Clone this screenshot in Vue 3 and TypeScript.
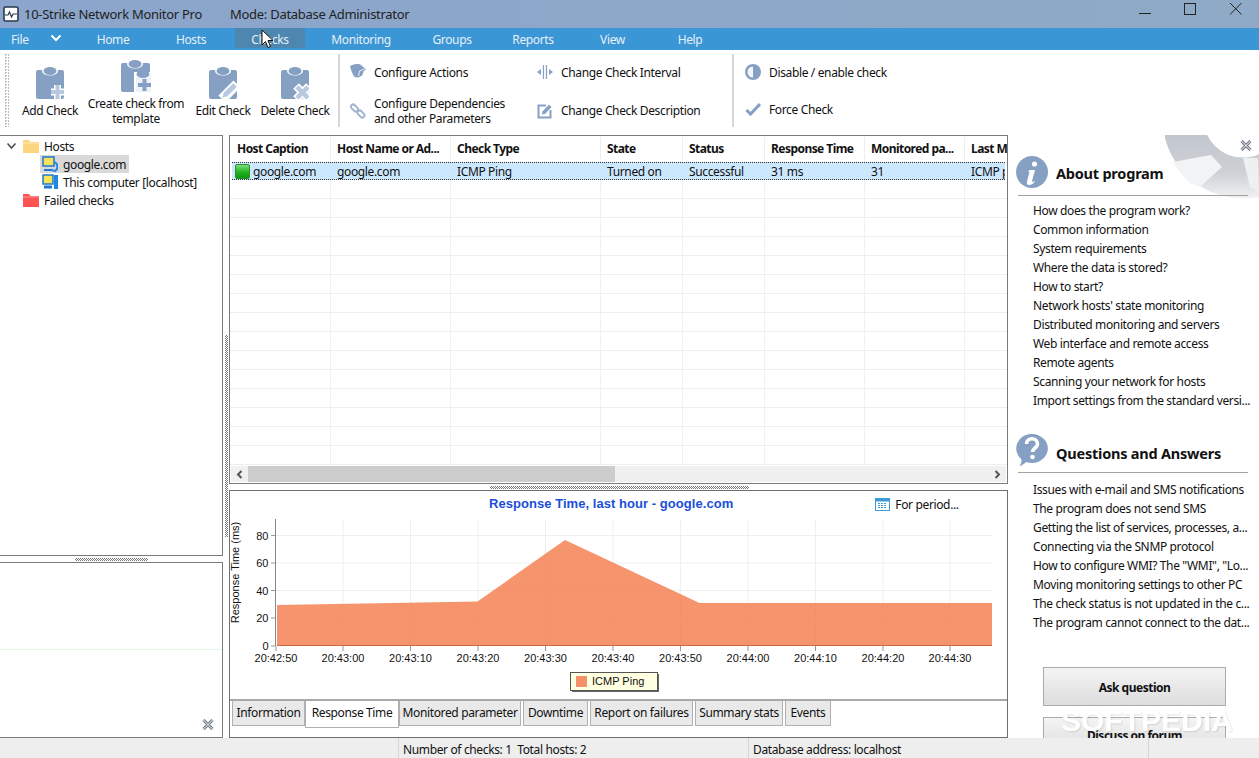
<script setup lang="ts">
const menu = [
  { t: 'Home', w: 68 }, { t: 'Hosts', w: 88 }, { t: 'Checks', w: 70, on: true }, { t: 'Monitoring', w: 112 },
  { t: 'Groups', w: 70 }, { t: 'Reports', w: 92 }, { t: 'View', w: 67 }, { t: 'Help', w: 88 },
]
const cols = [
  { t: 'Host Caption', w: 101, v: 'google.com' }, { t: 'Host Name or Ad...', w: 120, v: 'google.com' },
  { t: 'Check Type', w: 150, v: 'ICMP Ping' }, { t: 'State', w: 82, v: 'Turned on' },
  { t: 'Status', w: 82, v: 'Successful' }, { t: 'Response Time', w: 100, v: '31 ms' },
  { t: 'Monitored pa...', w: 100, v: '31' }, { t: 'Last M', w: 45, v: 'ICMP p' },
]
const emptyRows = Array.from({ length: 15 }, (_, i) => i)
const about = ['How does the program work?', 'Common information', 'System requirements', 'Where the data is stored?', 'How to start?', "Network hosts' state monitoring", 'Distributed monitoring and servers', 'Web interface and remote access', 'Remote agents', 'Scanning your network for hosts', 'Import settings from the standard versi...']
const faq = ['Issues with e-mail and SMS notifications', 'The program does not send SMS', 'Getting the list of services, processes, a...', 'Connecting via the SNMP protocol', 'How to configure WMI? The "WMI", "Lo...', 'Moving monitoring settings to other PC', 'The check status is not updated in the c...', 'The program cannot connect to the dat...']
const tabs = [
  { t: 'Information', w: 73 }, { t: 'Response Time', w: 94, on: true }, { t: 'Monitored parameter', w: 122 },
  { t: 'Downtime', w: 65 }, { t: 'Report on failures', w: 103 }, { t: 'Summary stats', w: 88 }, { t: 'Events', w: 46 },
]
const xTicks = [
  { x: 276, t: '20:42:50' }, { x: 343, t: '20:43:00' }, { x: 410.5, t: '20:43:10' }, { x: 478, t: '20:43:20' },
  { x: 545.5, t: '20:43:30' }, { x: 613, t: '20:43:40' }, { x: 680.5, t: '20:43:50' }, { x: 748, t: '20:44:00' },
  { x: 815.5, t: '20:44:10' }, { x: 883, t: '20:44:20' }, { x: 950, t: '20:44:30' },
]
const yTicks = [
  { y: 646, t: '0' }, { y: 618, t: '20' }, { y: 590.5, t: '40' }, { y: 563, t: '60' }, { y: 535.5, t: '80' },
]
</script>

<template>
  <div class="app">
    <header class="title">
      <svg class="logo" width="16" height="16" viewBox="0 0 16 16">
        <rect x="1" y="1" width="14" height="14" rx="1.500" fill="#fff" stroke="#2b3a4d" stroke-width="1.600" />
        <path d="M2 9h3l1.500-3 2 5 1.500-3h4" fill="none" stroke="#2b3a4d" stroke-width="1.200" />
      </svg>
      <span class="app-name">10-Strike Network Monitor Pro</span>
      <span class="mode">Mode: Database Administrator</span>
      <div class="win">
        <svg width="45" height="16" viewBox="0 0 45 16"><path d="M16 13.500h12" stroke="#222" fill="none" /></svg>
        <svg width="45" height="16" viewBox="0 0 45 16"><rect x="16.500" y="3.500" width="11" height="11" stroke="#222" fill="none" /></svg>
        <svg width="45" height="16" viewBox="0 0 45 16"><path d="M17 3l11.500 11.500M28.500 3L17 14.500" stroke="#222" fill="none" /></svg>
      </div>
    </header>

    <nav class="menu">
      <span class="m-file">File</span>
      <span class="m-chev">
        <svg width="12" height="8" viewBox="0 0 12 8"><path d="M1.500 1.500L6 6l4.500-4.500" fill="none" stroke="#fff" stroke-width="2" /></svg>
      </span>
      <span v-for="m in menu" :key="m.t" class="m-item" :class="{ on: m.on }" :style="{ width: m.w + 'px' }">{{ m.t }}</span>
    </nav>

    <section class="ribbon">
      <div class="r-grip"></div>
      <div class="big w-add">
        <svg width="28" height="32" viewBox="0 0 28 32">
          <rect class="clip" y="3" width="28" height="29" rx="2" />
          <ellipse cx="14" cy="4" rx="8" ry="4.500" fill="#fff" />
          <ellipse cx="14" cy="4" rx="6.500" ry="4" class="clip" />
          <path d="M21.500 18v14M15 25h13" stroke="#fff" stroke-width="7" />
          <path d="M21.500 18v14M15 25h13" stroke="#B7C8E0" stroke-width="4" />
        </svg>
        <span>Add Check</span>
      </div>
      <div class="big w-create">
        <svg width="30" height="32" viewBox="0 0 30 32">
          <rect class="clip" y="3" width="29" height="29" rx="2" />
          <ellipse cx="14" cy="4" rx="8" ry="4.500" fill="#fff" />
          <ellipse cx="14" cy="4" rx="6.500" ry="4" class="clip" />
          <rect x="13" y="12" width="17" height="20" fill="#fff" />
          <path d="M15 32V15h15v17z" fill="#EEF2F8" />
          <ellipse cx="22" cy="14" rx="6.500" ry="4" class="clip" />
          <path d="M23.500 19v12M17 25h13" stroke="#86A0C4" stroke-width="4" />
        </svg>
        <span>Create check from<br />template</span>
      </div>
      <div class="big w-edit">
        <svg width="28" height="32" viewBox="0 0 28 32">
          <rect class="clip" y="3" width="28" height="29" rx="2" />
          <ellipse cx="14" cy="4" rx="8" ry="4.500" fill="#fff" />
          <ellipse cx="14" cy="4" rx="6.500" ry="4" class="clip" />
          <path d="M13 32l15-15" stroke="#fff" stroke-width="10" />
          <path d="M16 28l10-10" stroke="#B7C8E0" stroke-width="5" />
          <path d="M13 31l2-5 3 3z" fill="#B7C8E0" />
        </svg>
        <span>Edit Check</span>
      </div>
      <div class="big w-del">
        <svg width="28" height="32" viewBox="0 0 28 32">
          <rect class="clip" y="3" width="28" height="29" rx="2" />
          <ellipse cx="14" cy="4" rx="8" ry="4.500" fill="#fff" />
          <ellipse cx="14" cy="4" rx="6.500" ry="4" class="clip" />
          <path d="M15 19l13 13M28 19L15 32" stroke="#fff" stroke-width="8" />
          <path d="M16 20l11 11M27 20L16 31" stroke="#B7C8E0" stroke-width="4.500" />
        </svg>
        <span>Delete Check</span>
      </div>

      <div class="group g-first">
        <div class="small s1">
          <svg width="16" height="16" viewBox="0 0 16 16">
            <path class="clip" d="M0 2C4 0 8-1 11 1l5 4.500c-2 .5-3 2.500-3.500 5.500-3 3-7 3.500-9 .5C2 8.500 .5 5 0 2z" />
            <path d="M8.500 12l1-5 5-2" fill="none" stroke="#fff" stroke-width=".8" />
          </svg>
          <span>Configure Actions</span>
        </div>
        <div class="small s2">
          <svg width="16" height="16" viewBox="0 0 16 16">
            <g fill="none" stroke="#A3B5D0" stroke-width="2">
              <rect x="-4" y="-2.200" width="8" height="4.400" rx="2" transform="translate(4.500 5) rotate(45)" />
              <rect x="-4" y="-2.200" width="8" height="4.400" rx="2" transform="translate(11 11) rotate(45)" />
            </g>
          </svg>
          <span>Configure Dependencies<br />and other Parameters</span>
        </div>
      </div>
      <div class="group g-second">
        <div class="small s1">
          <svg width="16" height="16" viewBox="0 0 16 16">
            <path d="M6.500 1v14M9.500 1v14" stroke="#86A0C4" stroke-width="1.200" />
            <path d="M0 8l4-3v6zM16 8l-4-3v6z" fill="#86A0C4" />
          </svg>
          <span>Change Check Interval</span>
        </div>
        <div class="small s2">
          <svg width="16" height="16" viewBox="0 0 16 16">
            <path d="M9 2.500H1.500v12h12V7" fill="none" stroke="#86A0C4" stroke-width="2" />
            <path d="M5 11.500l.5-3L12 1.500l2.500 2.500L8 11z" fill="#86A0C4" />
          </svg>
          <span>Change Check Description</span>
        </div>
      </div>
      <div class="group g-third">
        <div class="small s3">
          <svg width="16" height="16" viewBox="0 0 16 16">
            <circle cx="8" cy="8" r="8" fill="#86A0C4" />
            <path d="M8 2.500a5.500 5.500 0 0 0 0 11z" fill="#F2F5F9" />
          </svg>
          <span>Disable / enable check</span>
        </div>
        <div class="small s3">
          <svg width="16" height="16" viewBox="0 0 16 16"><path d="M1.500 9l4 4L15 3" fill="none" stroke="#86A0C4" stroke-width="3" /></svg>
          <span>Force Check</span>
        </div>
      </div>
    </section>

    <main class="main">
      <aside class="left">
        <div class="tree">
          <div class="t-row t-root">
            <svg class="t-chev" width="9" height="6" viewBox="0 0 9 6"><path d="M.5.500L4.500 5l4-4.500" fill="none" stroke="#444" stroke-width="1.500" /></svg>
            <svg width="16" height="13" viewBox="0 0 16 13"><path d="M0 0h6l1.500 2H16v11H0z" fill="#FCD57E" /><path d="M0 3h16" stroke="#FFE9B8" /></svg>
            <span>Hosts</span>
          </div>
          <div class="t-row t-host sel">
            <svg width="16" height="16" viewBox="0 0 16 16">
              <rect x="1" y="1" width="11" height="9" fill="#F7E35A" stroke="#1E78D0" stroke-width="1.500" />
              <path d="M2 14h8" stroke="#1E78D0" stroke-width="2" />
              <path d="M12 6a5 5 0 0 1 0 9.500M9 13.500a4 4 0 0 0 3 1" fill="none" stroke="#1E88E5" stroke-width="2" />
            </svg>
            <span>google.com</span>
          </div>
          <div class="t-row t-host">
            <svg width="16" height="16" viewBox="0 0 16 16">
              <rect x="1" y="1" width="10" height="9" fill="#F7E35A" stroke="#1E78D0" stroke-width="1.500" />
              <rect x="12" y="1" width="4" height="14" fill="#1E88E5" />
              <path d="M2 13h8" stroke="#1E78D0" stroke-width="3" />
            </svg>
            <span>This computer [localhost]</span>
          </div>
          <div class="t-row t-root">
            <span class="t-pad"></span>
            <svg width="16" height="13" viewBox="0 0 16 13"><path d="M0 0h6l1.500 2H16v11H0z" fill="#FF5252" /><path d="M0 3h16" stroke="#FF9A9A" /></svg>
            <span>Failed checks</span>
          </div>
        </div>
        <div class="h-split"><i class="h-grip short"></i></div>
        <div class="lower">
          <div class="green-line"></div>
          <svg class="close lower-close" width="12" height="11" viewBox="0 0 12 11"><path d="M1.500 1l9 9M10.500 1l-9 9" stroke="#6d7482" stroke-width="3" /><path d="M1.500 1l9 9M10.500 1l-9 9" stroke="#fff" stroke-width="1" /></svg>
        </div>
      </aside>
      <div class="v-split"><i class="v-grip"></i></div>

      <section class="center">
        <div class="table">
          <div class="thead">
            <div v-for="c in cols" :key="c.t" class="th" :style="{ width: c.w + 'px' }">{{ c.t }}</div>
          </div>
          <div class="tbody">
            <div class="tr-sel">
              <div v-for="(c, i) in cols" :key="c.t" class="td" :style="{ width: c.w + 'px' }">
                <span v-if="i === 0" class="led"></span>{{ c.v }}
              </div>
            </div>
            <div v-for="r in emptyRows" :key="r" class="tr">
              <div v-for="c in cols" :key="c.t" class="cell" :style="{ width: c.w + 'px' }"></div>
            </div>
          </div>
          <div class="scroll">
            <span class="arrow"><svg width="7" height="9" viewBox="0 0 7 9"><path d="M5.500 1L2 4.500 5.500 8" fill="none" stroke="#555" stroke-width="2" /></svg></span>
            <span class="thumb"></span>
            <span class="track"></span>
            <span class="arrow"><svg width="7" height="9" viewBox="0 0 7 9"><path d="M1.500 1L5 4.500 1.500 8" fill="none" stroke="#555" stroke-width="2" /></svg></span>
          </div>
        </div>
        <div class="h-split"><i class="h-grip wide"></i></div>
        <div class="chart">
          <div class="c-head">
            <span class="c-title">Response Time, last hour - google.com</span>
            <span class="c-period">
              <svg width="15" height="14" viewBox="0 0 15 14">
                <rect x=".5" y="1.500" width="14" height="12" fill="#fff" stroke="#3D9BD8" />
                <rect x="0" y="1" width="15" height="3.500" fill="#3D9BD8" />
                <path d="M3 6.500h9M3 8.500h9M3 10.500h9" stroke="#3D9BD8" stroke-dasharray="2 1" />
              </svg>
              For period...
            </span>
          </div>
          <svg class="plot" width="777" height="180" viewBox="230 519 777 180">
            <g stroke="#EFEFEF">
              <line v-for="t in yTicks.slice(1)" :key="t.y" x1="276" :y1="t.y" x2="992" :y2="t.y" />
              <line v-for="t in xTicks.slice(1)" :key="t.x" :x1="t.x" y1="519" :x2="t.x" y2="646" />
            </g>
            <path d="M277 605L477.500 601.500 565 540 699.500 603H992V646H277z" fill="#F4794A" fill-opacity=".8" />
            <line x1="277" y1="645.500" x2="992" y2="645.500" stroke="#C9674A" />
            <line x1="275.500" y1="519" x2="275.500" y2="646" stroke="#888" />
            <g stroke="#999">
              <line v-for="t in yTicks" :key="t.y" x1="271" :y1="t.y" x2="275" :y2="t.y" />
              <line v-for="t in xTicks" :key="t.x" :x1="t.x" y1="646" :x2="t.x" y2="651" />
            </g>
            <g class="ax">
              <text v-for="t in yTicks" :key="t.y" x="268.500" :y="t.y + 4" text-anchor="end">{{ t.t }}</text>
              <text v-for="t in xTicks" :key="t.x" :x="t.x" y="662" text-anchor="middle">{{ t.t }}</text>
              <text transform="translate(239 572.500) rotate(-90)" text-anchor="middle">Response Time (ms)</text>
            </g>
            <rect x="572" y="674" width="87" height="18" fill="#666" />
            <rect x="570.500" y="672.500" width="87" height="18" fill="#FFFFE1" stroke="#555" />
            <rect x="576" y="676" width="11" height="11" fill="#F4916B" />
            <text class="ax" x="592" y="685">ICMP Ping</text>
          </svg>
          <div class="tabs">
            <span v-for="t in tabs" :key="t.t" class="tab" :class="{ on: t.on }" :style="{ width: t.w + 'px' }">{{ t.t }}</span>
          </div>
        </div>
      </section>

      <aside class="right">
        <svg class="buoy" width="170" height="70" viewBox="1165 135 170 70">
          <defs>
            <linearGradient id="fade" gradientUnits="userSpaceOnUse" x1="0" y1="135" x2="0" y2="198">
              <stop offset="0" stop-color="#C2C7CE" />
              <stop offset=".6" stop-color="#CDD1D6" />
              <stop offset="1" stop-color="#F0F1F2" />
            </linearGradient>
          </defs>
          <circle cx="1243" cy="118" r="60" fill="none" stroke="url(#fade)" stroke-width="41" />
          <path d="M1173 162l38-7 11 12-22 20-10-4-10-11z" fill="#F2F3F4" />
          <path d="M1243 158l15 0 1 34-9-5z" fill="#EFF0F2" />
        </svg>
        <svg class="close top-close" width="12" height="11" viewBox="0 0 12 11"><path d="M1.500 1l9 9M10.500 1l-9 9" stroke="#6d7482" stroke-width="3" /><path d="M1.500 1l9 9M10.500 1l-9 9" stroke="#fff" stroke-width="1" /></svg>

        <div class="sec first">
          <div class="sec-head">
            <svg width="32" height="32" viewBox="0 0 32 32">
              <circle cx="16" cy="16" r="16" fill="#86A0C4" />
              <circle cx="18.500" cy="8" r="2.600" fill="#fff" />
              <path d="M14 14h5l-3 11c0 1.500 1.500 1 3-.5-1 3-3.500 4.500-6 4.500-2 0-2.500-1.500-2-3.500l2.500-9.500c-.5-.5-1-.5-2-.5z" fill="#fff" />
            </svg>
            <span>About program</span>
          </div>
          <ul><li v-for="a in about" :key="a">{{ a }}</li></ul>
        </div>
        <div class="sec second">
          <div class="sec-head">
            <svg width="32" height="32" viewBox="0 0 32 32">
              <path d="M16 0a16 14.500 0 1 1-6 28c-2 2-4 3.500-6.500 4 1.500-2 2-4 2-6.500A15 14.500 0 0 1 16 0z" fill="#86A0C4" />
              <path d="M10.500 10c0-7 11-7 11 0 0 4-5 4-5 8" fill="none" stroke="#fff" stroke-width="3.600" />
              <circle cx="16.500" cy="23" r="2.300" fill="#fff" />
            </svg>
            <span>Questions and Answers</span>
          </div>
          <ul><li v-for="q in faq" :key="q">{{ q }}</li></ul>
        </div>
        <button class="btn ask">Ask question</button>
        <button class="btn forum">Discuss on forum</button>
        <div class="mark">SOFTPEDIA</div>
      </aside>
    </main>

    <footer class="status">
      <span class="st st1"></span>
      <span class="st st2">Number of checks: 1&nbsp;&nbsp;Total hosts: 2</span>
      <span class="st st3">Database address: localhost</span>
      <span class="st st4"></span>
    </footer>

    <svg class="cursor" width="13" height="20" viewBox="0 0 13 20">
      <path d="M1 1v15l3.500-3.500 2.500 6 2.500-1-2.500-6H12z" fill="#fff" stroke="#111" />
    </svg>
  </div>
</template>

<style>
html, body { margin: 0; background: #fff; }
</style>

<style scoped>
.app {
  position: relative;
  width: 1259px;
  height: 758px;
  overflow: hidden;
  display: flex;
  flex-direction: column;
  background: #fff;
  color: #111;
  font: 12px/15px "Noto Sans", "Liberation Sans", sans-serif;
  letter-spacing: -0.36px;
}
.title {
  height: 28px;
  flex: none;
  display: flex;
  align-items: center;
  padding-left: 3px;
  background: linear-gradient(90deg, #8BA5CC, #8FAAC6);
  font-size: 13px;
  color: #222;
  letter-spacing: -0.28px;
}
.logo { margin-right: 5px; }
.app-name { width: 206px; }
.win { margin-left: auto; display: flex; margin-right: 1px; align-self: flex-start; }
.menu {
  height: 22px;
  flex: none;
  display: flex;
  background: #3A96D4;
  color: #E6F0F8;
}
.m-file { width: 44px; padding-left: 11px; box-sizing: border-box; line-height: 23px; }
.m-chev { width: 24px; margin-right: 11px; display: flex; align-items: center; justify-content: center; height: 20px; }
.m-item { height: 20px; line-height: 23px; text-align: center; }
.m-item.on { background: #4D86AE; }
.ribbon {
  height: 85px;
  flex: none;
  box-sizing: border-box;
  display: flex;
  padding: 4px 0 8px 4px;
}
.r-grip {
  width: 5px;
  margin-right: 3px;
  background: repeating-conic-gradient(#BDBDBD 0 25%, transparent 0 100%) 0 0 / 3px 3px;
}
.big {
  display: flex;
  flex-direction: column;
  align-items: center;
  justify-content: center;
  gap: 4px;
  padding-top: 4px;
  box-sizing: border-box;
  text-align: center;
  white-space: nowrap;
}
.w-add { width: 76px; }
.w-create { width: 96px; }
.w-edit { width: 78px; }
.w-del { width: 66px; }
.clip { fill: #86A0C4; }
.group { border-left: 2px solid #d6d6d6; box-sizing: border-box; display: flex; flex-direction: column; }
.g-first { margin-left: 10px; width: 199px; padding-left: 10px; padding-top: 2px; }
.g-second { border-left: 0; width: 195px; padding-top: 2px; }
.g-third { padding-left: 11px; }
.g-third .small + .small { margin-top: 1px; }
.small { display: flex; align-items: center; gap: 8px; white-space: nowrap; }
.s1 { height: 36px; margin-bottom: 6px; }
.s2 { height: 36px; }
.s3 { height: 37px; }
.main { flex: 1; display: flex; min-height: 0; }
.left { width: 223px; flex: none; display: flex; flex-direction: column; }
.tree {
  height: 421px;
  box-sizing: border-box;
  border: 1px solid #7b7b7b;
  border-left: 0;
  padding-top: 1px;
}
.t-row { height: 18px; display: flex; align-items: center; white-space: nowrap; }
.t-root svg + svg, .t-pad + svg { margin-right: 5px; }
.t-chev { margin: 0 7px; }
.t-pad { width: 23px; }
.t-host { margin-left: 40px; padding-left: 2px; width: fit-content; padding-right: 3px; gap: 5px; }
.t-host.sel { background: #D9D9D9; }
.h-split { height: 6px; position: relative; flex: none; }
.h-grip {
  position: absolute;
  top: 2px;
  height: 3px;
  background: repeating-conic-gradient(#777 0 25%, transparent 0 50%) 0 0 / 2px 2px;
}
.h-grip.short { left: 75px; width: 73px; }
.h-grip.wide { left: 261px; width: 259px; }
.lower {
  flex: 1;
  position: relative;
  border: 2px solid #7b7b7b;
  border-width: 1px 1px 1px 0;
}
.green-line { position: absolute; left: 0; right: 0; top: 86px; height: 1px; background: #E6F7E6; }
.close { position: absolute; }
.lower-close { right: 8px; bottom: 7px; }
.v-split { width: 6px; flex: none; position: relative; }
.v-grip {
  position: absolute;
  left: 2px;
  top: 200px;
  width: 3px;
  height: 202px;
  background: repeating-conic-gradient(#777 0 25%, transparent 0 50%) 0 0 / 2px 2px;
}
.center { width: 779px; flex: none; display: flex; flex-direction: column; }
.table {
  height: 349px;
  flex: none;
  box-sizing: border-box;
  border: 1px solid #7b7b7b;
  display: flex;
  flex-direction: column;
  overflow: hidden;
}
.thead { height: 26px; flex: none; display: flex; overflow: hidden; }
.th {
  flex: none;
  box-sizing: border-box;
  padding-left: 6px;
  margin-top: 1px;
  height: 24px;
  line-height: 23px;
  font-weight: 700;
  letter-spacing: -0.55px;
  border-right: 1px solid #eee;
  white-space: nowrap;
  overflow: hidden;
}
.th:first-child { padding-left: 7px; }
.tbody { flex: 1; overflow: hidden; }
.tr-sel {
  height: 18px;
  box-sizing: border-box;
  display: flex;
  margin: 0 2px;
  background: #CCE8FF;
  border-top: 1px dotted #333;
  border-bottom: 1px dotted #333;
  overflow: hidden;
}
.td { flex: none; box-sizing: border-box; padding-left: 6px; line-height: 15px; white-space: nowrap; overflow: hidden; display: flex; align-items: center; }
.td:first-child { padding-left: 3px; width: 99px !important; }
.led {
  width: 15px;
  height: 15px;
  flex: none;
  margin-right: 3px;
  border-radius: 2px;
  box-sizing: border-box;
  border: 1px solid #2D8A2D;
  background: linear-gradient(#7BE07B, #1FB31F 55%, #0E9A0E);
}
.tr { height: 19px; box-sizing: border-box; display: flex; border-bottom: 1px solid #EEE; overflow: hidden; }
.cell { flex: none; box-sizing: border-box; border-right: 1px solid #F0F0F0; }
.scroll { height: 16px; flex: none; display: flex; margin: 0 1px 1px; background: #F0F0F0; }
.arrow { width: 17px; flex: none; display: flex; align-items: center; justify-content: center; }
.thumb { width: 367px; background: #CDCDCD; }
.track { flex: 1; }
.chart {
  flex: 1;
  box-sizing: border-box;
  border: 1px solid #6f6f6f;
  display: flex;
  flex-direction: column;
  min-height: 0;
  overflow: hidden;
}
.c-head { height: 26px; margin-bottom: 2px; flex: none; display: flex; align-items: center; }
.c-title {
  margin-left: 259px;
  font: 700 13px/16px "Liberation Sans", sans-serif;
  letter-spacing: 0.05px;
  color: #1B4FD8;
  white-space: nowrap;
}
.c-period { margin-left: 142px; display: flex; align-items: center; gap: 5px; }
.plot { display: block; flex: none; }
.ax { font: 11px "Liberation Sans", sans-serif; letter-spacing: 0; fill: #111; }
.tabs {
  flex: 1;
  display: flex;
  box-sizing: border-box;
  border-top: 2px solid #A9A9A9;
  padding-left: 2px;
}
.tab {
  height: 25px;
  box-sizing: border-box;
  border: 1px solid #B0B0B0;
  border-top: 0;
  background: #E9E9E9;
  text-align: center;
  line-height: 24px;
  white-space: nowrap;
}
.tab.on { height: 27px; background: #fff; }
.tab:nth-child(n+4) { margin-left: 2px; }
.right { flex: 1; position: relative; overflow: hidden; min-width: 0; }
.buoy { position: absolute; left: 157px; top: 0; }
.top-close { right: 7px; top: 5px; }
.sec { position: relative; }
.sec.first { padding-top: 21px; }
.sec.second { padding-top: 24px; }
.sec-head {
  display: flex;
  align-items: center;
  gap: 8px;
  height: 32px;
  margin-left: 8px;
  font-weight: 700;
  font-size: 14.5px;
  letter-spacing: -0.22px;
  white-space: nowrap;
}
.first .sec-head span { margin-top: 2px; }
.second .sec-head span { margin-top: 6px; }
ul {
  list-style: none;
  margin: 7px 0 0 10px;
  padding: 5px 0 0 15px;
  width: 230px;
  box-sizing: border-box;
  border-top: 1px solid #A0A0A0;
  white-space: nowrap;
}
.second ul { margin-top: 6px; padding-top: 7px; }
li { line-height: 19px; height: 19px; }
.btn {
  display: block;
  width: 183px;
  height: 39px;
  margin: 0 0 0 35px;
  padding: 1px 0 0;
  border: 1px solid #ABABAB;
  background: linear-gradient(#F4F4F4, #DDD);
  color: #111;
  font: inherit;
  font-weight: 700;
  letter-spacing: -0.5px;
}
.ask { margin-top: 35px; }
.forum { margin-top: 11px; height: 36px; }
.mark {
  position: absolute;
  left: 53px;
  top: 571px;
  font: 700 30px/30px "Liberation Sans", sans-serif;
  letter-spacing: 0;
  color: #fff;
  text-shadow: 1px 1px 2px rgba(0, 0, 0, .12);
  white-space: nowrap;
}
.status {
  height: 20px;
  flex: none;
  display: flex;
  background: #EEE;
  line-height: 23px;
  white-space: nowrap;
}
.st { box-sizing: border-box; padding-left: 4px; }
.st1 { width: 398px; }
.st2 { width: 350px; border-left: 1px solid #D5D5D5; }
.st3 { width: 400px; border-left: 1px solid #D5D5D5; }
.st4 { flex: 1; border-left: 1px solid #D5D5D5; }
.cursor { position: absolute; left: 261px; top: 29px; }
</style>
